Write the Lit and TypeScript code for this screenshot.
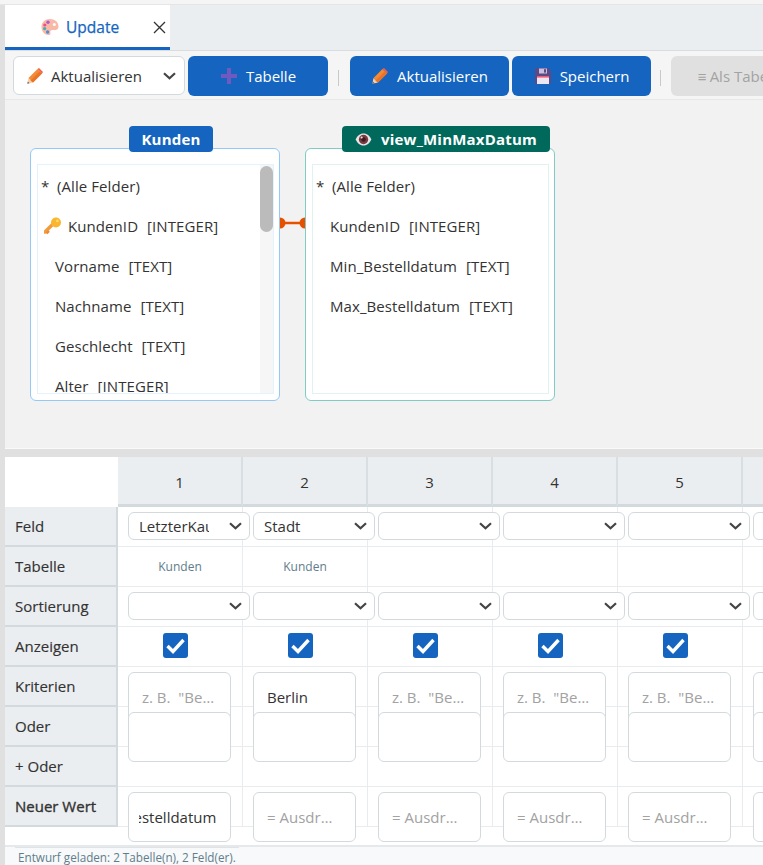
import { LitElement, html, css, svg } from "lit";
import { customElement } from "lit/decorators.js";

const pencil = html`<svg class="ico" viewBox="0 0 16 16">
  <polygon points="0.300,15.700 1.500,10 6,14.500" fill="#f6cfa8" />
  <polygon points="1.500,10 10.500,1 15,5.500 6,14.500" fill="#f58a35" />
  <polygon points="3.500,12.500 12.500,3.500 15,5.500 6,14.500" fill="#e8742a" />
  <polygon points="10.500,1 12,0 16,4 15,5.500" fill="#f0604a" />
  <polygon points="0.300,15.700 0.800,13.400 2.600,15.200" fill="#666" />
</svg>`;

const plus = html`<svg class="ico" viewBox="0 0 16 16">
  <rect x="6" y="0" width="4" height="16" fill="#6f5bbf" />
  <rect x="0" y="6" width="16" height="4" fill="#6f5bbf" />
</svg>`;

const floppy = html`<svg class="ico" viewBox="0 0 16 16">
  <path d="M0 1.500A1.500 1.500 0 0 1 1.500 0H13l3 3v11.500a1.500 1.500 0 0 1-1.500 1.500h-13A1.500 1.500 0 0 1 0 14.500z" fill="#5b4a86" />
  <rect x="4" y="0.500" width="8" height="5" fill="#c9bfe0" />
  <rect x="9" y="1.200" width="2" height="3.400" fill="#5b4a86" />
  <rect x="2" y="8" width="12" height="8" fill="#ece6f4" />
  <rect x="2" y="8" width="12" height="1.600" fill="#ef5a6f" />
</svg>`;

const key = html`<svg class="key" viewBox="0 0 18 18">
  <path d="M1 15 L9 7" stroke="#f39a3a" stroke-width="3.400" stroke-linecap="round" />
  <path d="M2.500 16.500 L5 14" stroke="#ec8a32" stroke-width="2.400" />
  <circle cx="12" cy="5.500" r="5" fill="#fbb62f" />
  <circle cx="13.400" cy="3.900" r="1.300" fill="#ffdc78" />
</svg>`;

const eye = html`<svg class="eye" viewBox="0 0 18 14">
  <path d="M0.500 7C3 2 6 0.600 9 0.600S15 2 17.500 7C15 12 12 13.400 9 13.400S3 12 0.500 7Z" fill="#e9e4e6" />
  <circle cx="9" cy="7" r="5" fill="#7b3a40" />
  <circle cx="9" cy="7" r="2.500" fill="#3c1c22" />
  <circle cx="7" cy="4.800" r="1.100" fill="#f4e4e6" />
</svg>`;

const palette = html`<svg class="palette" viewBox="0 0 18 18">
  <path d="M9 1C4 1 0.500 4.400 0.500 9s3.400 8 7 8c2 0 2.200-1.300 1.800-2.600-.4-1.500.5-2.400 2-2.400h2.700c2 0 3.500-1.200 3.500-3.300C17.500 3.800 13.600 1 9 1Z" fill="#f8b9a6" />
  <circle cx="7" cy="4.200" r="1.700" fill="#b05ad0" />
  <circle cx="3.800" cy="7" r="1.600" fill="#ec4f8f" />
  <circle cx="3.600" cy="10.600" r="1.600" fill="#3fb0b8" />
  <circle cx="6.600" cy="14" r="1.700" fill="#4b8fdc" />
  <circle cx="13.300" cy="6.500" r="1.500" fill="#fff" />
</svg>`;

const chevron = svg`<path d="M1 1.200 6.500 6.200 12 1.200" fill="none" stroke="#444" stroke-width="2.200" />`;

const kundenFields = [
  ["Vorname", "TEXT"],
  ["Nachname", "TEXT"],
  ["Geschlecht", "TEXT"],
  ["Alter", "INTEGER"],
];

const viewFields = [
  ["KundenID", "INTEGER"],
  ["Min_Bestelldatum", "TEXT"],
  ["Max_Bestelldatum", "TEXT"],
];

const labels = ["Feld", "Tabelle", "Sortierung", "Anzeigen", "Kriterien", "Oder", "+ Oder", "Neuer Wert"];
const cols = [1, 2, 3, 4, 5, 6];
const feld = ["LetzterKauf", "Stadt", "", "", "", ""];
const tabelle = ["Kunden", "Kunden", "", "", "", ""];
const kriterien = ["", "Berlin", "", "", "", ""];
const neuerWert = ["=Max_Bestelldatum", "", "", "", "", ""];

@customElement("app-root")
export class AppRoot extends LitElement {
  static styles = css`
    :host {
      display: block;
      width: 100%;
      height: 865px;
      overflow: hidden;
      background: #f5f5f5;
      font-family: "Open Sans", "Noto Sans", sans-serif;
      font-size: 15px;
      color: #333;
    }
    * {
      box-sizing: border-box;
    }
    .top {
      height: 5px;
      background: #f5f5f5;
      border-bottom: 1px solid #e6e6e6;
    }
    .shell {
      display: flex;
      height: 860px;
    }
    .edge {
      width: 5px;
      flex: none;
      background: #e0e0e0;
    }
    .main {
      flex: 1;
      min-width: 0;
      display: flex;
      flex-direction: column;
      overflow: hidden;
    }
    .tabs {
      height: 46px;
      flex: none;
      background: #ebeef1;
      border-bottom: 1px solid #d8dde0;
    }
    .tab {
      width: 165px;
      height: 45px;
      background: #fff;
      border-bottom: 3px solid #1565c0;
      display: flex;
      align-items: center;
      padding: 2px 4px 0 36px;
      color: #1565c0;
      font-size: 15.500px;
      -webkit-text-stroke: 0.250px #1565c0;
    }
    .palette {
      width: 18px;
      height: 18px;
      margin-right: 7px;
    }
    .close {
      margin-left: auto;
      width: 13px;
      height: 13px;
    }
    .toolbar {
      height: 49px;
      flex: none;
      display: flex;
      align-items: flex-start;
      padding: 5px 0 0 8px;
      gap: 3px;
      background: #f5f5f5;
      border-bottom: 1px solid #e8e8e8;
      overflow: hidden;
    }
    .mode {
      width: 172px;
      height: 39px;
      flex: none;
      display: flex;
      align-items: center;
      gap: 8px;
      padding: 0 8px 0 13px;
      background: #fff;
      border: 1px solid #d2dade;
      border-radius: 6px;
    }
    .mode svg.chev {
      margin-left: auto;
      width: 13px;
      height: 8px;
    }
    .ico {
      width: 16px;
      height: 16px;
      flex: none;
    }
    .btn {
      height: 40px;
      flex: none;
      display: flex;
      align-items: center;
      justify-content: center;
      gap: 9px;
      background: #1565c0;
      color: #fff;
      border-radius: 6px;
    }
    .btn.w140 {
      width: 140px;
      padding-left: 1px;
    }
    .btn.w159 {
      width: 159px;
      padding-left: 1px;
    }
    .btn.w139 {
      width: 139px;
      padding-left: 1px;
    }
    .btn.off {
      width: 140px;
      gap: 3px;
      background: #e0e0e0;
      color: #a3a3a3;
    }
    .sep {
      flex: none;
      height: 16px;
      width: 1px;
      margin: 14px 8px 0 7px;
      background: #c9c9c9;
    }
    .sep.b {
      margin: 14px 7px 0 6px;
    }
    .canvas {
      position: relative;
      height: 349px;
      flex: none;
      background: #f2f2f2;
      border-bottom: 1px solid #fafafa;
    }
    .node {
      position: absolute;
      top: 48px;
      width: 250px;
      height: 253px;
      background: #fff;
      border: 1px solid #90caf9;
      border-radius: 6px;
      padding: 15px 5px 6px 6px;
    }
    .node.view {
      border-color: #80cbc4;
    }
    .node.kunden {
      left: 25px;
    }
    .node.right {
      left: 300px;
    }
    .badge {
      position: absolute;
      top: -23px;
      height: 26px;
      display: flex;
      align-items: center;
      justify-content: center;
      gap: 9px;
      border-radius: 4px;
      background: #1565c0;
      color: #fff;
      font-weight: 700;
      letter-spacing: 0.200px;
    }
    .kunden .badge {
      left: 98px;
      width: 84px;
    }
    .view .badge {
      left: 36px;
      width: 208px;
      background: #00695c;
    }
    .eye {
      width: 17px;
      height: 13px;
    }
    .inner {
      height: 100%;
      display: flex;
      border: 1px solid #e3f2fd;
      overflow: hidden;
    }
    .view .inner {
      border-color: #e0f2f1;
    }
    .list {
      flex: 1;
      min-width: 0;
      padding-top: 1px;
    }
    .row {
      height: 40px;
      display: flex;
      align-items: center;
      padding-left: 17px;
      white-space: nowrap;
      letter-spacing: 0.080px;
    }
    .row.all {
      padding-left: 3px;
    }
    .row.pk {
      padding-left: 6px;
    }
    .star {
      width: 16px;
    }
    .key {
      width: 18px;
      height: 18px;
      margin-right: 6px;
    }
    .type {
      margin-left: 9px;
    }
    .track {
      width: 13px;
      flex: none;
      background: #f6f6f6;
    }
    .thumb {
      height: 66px;
      margin-top: 1px;
      border-radius: 7px;
      background: #bbb;
    }
    .link {
      position: absolute;
      left: 274px;
      top: 114px;
      width: 27px;
      height: 18px;
    }
    .splitter {
      height: 8px;
      flex: none;
      background: #e0e0e0;
    }
    .gridwrap {
      height: 388px;
      flex: none;
      background: #fff;
      overflow: hidden;
    }
    .grid {
      display: grid;
      grid-template-columns: 113px repeat(6, 125px);
      grid-template-rows: 50px repeat(8, 40px);
    }
    .corner {
      background: #fff;
    }
    .head {
      display: flex;
      align-items: center;
      justify-content: center;
      background: #ebeef1;
      border-right: 2px solid #d8dfe3;
      border-bottom: 3px solid #d2dade;
      padding-top: 2px;
    }
    .label {
      display: flex;
      align-items: center;
      padding-left: 10px;
      background: #ebeef1;
      border-right: 2px solid #d2dade;
      border-bottom: 2px solid #d2dade;
      -webkit-text-stroke: 0.150px #333;
    }
    .label.strong {
      -webkit-text-stroke: 0.350px #333;
    }
    .cell {
      border-right: 1px solid #e9ecef;
      border-bottom: 1px solid #e9ecef;
      padding: 5px 0 0 10px;
      min-width: 0;
    }
    .cell.table {
      padding: 0;
      display: flex;
      align-items: center;
      justify-content: center;
      font-size: 12px;
      color: #607d8b;
    }
    .pick {
      position: relative;
      width: 122px;
      height: 28px;
    }
    select {
      appearance: none;
      display: block;
      width: 100%;
      height: 100%;
      padding: 0 40px 0 10px;
      background: #fff;
      border: 1px solid #d2dade;
      border-radius: 6px;
      font: inherit;
      color: #333;
    }
    .pick svg {
      position: absolute;
      right: 8px;
      top: 10px;
      width: 13px;
      height: 8px;
      pointer-events: none;
    }
    .check {
      width: 25px;
      height: 25px;
      margin: 1px 0 0 35px;
      background: #1565c0;
      border-radius: 3px;
    }
    .check svg {
      display: block;
      width: 25px;
      height: 25px;
    }
    input {
      display: block;
      width: 103px;
      height: 50px;
      padding: 0 14px 0 13px;
      background: #fff;
      border: 1px solid #d2dade;
      border-radius: 6px;
      font: inherit;
      color: #333;
      text-overflow: ellipsis;
    }
    input::placeholder {
      color: #a2a2a2;
      opacity: 1;
    }
    input.scrolled {
      padding: 0 14px 0 10px;
      text-overflow: clip;
    }
    .status {
      flex: 1;
      background: #f8f9fa;
      border-top: 2px solid #e6e9eb;
      padding-left: 10px;
      font-size: 11.700px;
      color: #607d8b;
    }
    .status span {
      display: inline-block;
      padding: 0 3px;
      height: 18px;
      line-height: 19px;
      border-top: 1px solid #dfe3e6;
    }
  `;

  updated() {
    this.renderRoot.querySelectorAll<HTMLInputElement>("input.scrolled").forEach((el) => {
      el.scrollLeft = el.scrollWidth;
    });
  }

  private pick(value: string, options: string[] = []) {
    return html`<div class="pick">
      <select>
        <option ?selected=${!value}></option>
        ${options.map((o) => html`<option ?selected=${o === value}>${o}</option>`)}
      </select>
      <svg viewBox="0 0 13 8">${chevron}</svg>
    </div>`;
  }

  private field(rows: string[][]) {
    return rows.map(
      ([name, type]) => html`<div class="row"><span>${name}</span><span class="type">[${type}]</span></div>`
    );
  }

  render() {
    return html`
      <div class="top"></div>
      <div class="shell">
        <div class="edge"></div>
        <div class="main">
          <div class="tabs">
            <div class="tab">
              ${palette}Update
              <svg class="close" viewBox="0 0 13 13">
                <path d="M1 1 12 12M12 1 1 12" stroke="#333" stroke-width="1.300" />
              </svg>
            </div>
          </div>

          <div class="toolbar">
            <div class="mode">
              ${pencil}<span>Aktualisieren</span>
              <svg class="chev" viewBox="0 0 13 8">${chevron}</svg>
            </div>
            <div class="btn w140">${plus}Tabelle</div>
            <div class="sep"></div>
            <div class="btn w159">${pencil}Aktualisieren</div>
            <div class="btn w139">${floppy}Speichern</div>
            <div class="sep b"></div>
            <div class="btn off"><span>≡</span>Als Tabelle</div>
          </div>

          <div class="canvas">
            <div class="node kunden">
              <div class="badge">Kunden</div>
              <div class="inner">
                <div class="list">
                  <div class="row all"><span class="star">*</span><span>(Alle Felder)</span></div>
                  <div class="row pk">${key}<span>KundenID</span><span class="type">[INTEGER]</span></div>
                  ${this.field(kundenFields)}
                </div>
                <div class="track"><div class="thumb"></div></div>
              </div>
            </div>
            <svg class="link" viewBox="0 0 27 18">
              <path d="M2 9H25" stroke="#e65100" stroke-width="2.500" />
              <path d="M1 3.500A5.500 5.500 0 0 1 1 14.500Z" fill="#e65100" />
              <path d="M26 3.500A5.500 5.500 0 0 0 26 14.500Z" fill="#e65100" />
            </svg>
            <div class="node view right">
              <div class="badge">${eye}view_MinMaxDatum</div>
              <div class="inner">
                <div class="list">
                  <div class="row all"><span class="star">*</span><span>(Alle Felder)</span></div>
                  ${this.field(viewFields)}
                </div>
              </div>
            </div>
          </div>

          <div class="splitter"></div>

          <div class="gridwrap">
            <div class="grid">
              <div class="corner"></div>
              ${cols.map((c) => html`<div class="head">${c}</div>`)}

              <div class="label">${labels[0]}</div>
              ${feld.map((v) => html`<div class="cell">${this.pick(v, v ? [v] : [])}</div>`)}

              <div class="label">${labels[1]}</div>
              ${tabelle.map((v) => html`<div class="cell table">${v}</div>`)}

              <div class="label">${labels[2]}</div>
              ${cols.map(() => html`<div class="cell">${this.pick("")}</div>`)}

              <div class="label">${labels[3]}</div>
              ${cols.map(
                () => html`<div class="cell">
                  <div class="check">
                    <svg viewBox="0 0 25 25">
                      <path d="M4.500 13 10 18.500 20.500 7" fill="none" stroke="#fff" stroke-width="3.400" />
                    </svg>
                  </div>
                </div>`
              )}

              <div class="label">${labels[4]}</div>
              ${kriterien.map(
                (v) => html`<div class="cell"><input .value=${v} placeholder='z. B.  "Berlin"' /></div>`
              )}

              <div class="label">${labels[5]}</div>
              ${cols.map(() => html`<div class="cell"><input /></div>`)}

              <div class="label">${labels[6]}</div>
              ${cols.map(() => html`<div class="cell"></div>`)}

              <div class="label strong">${labels[7]}</div>
              ${neuerWert.map(
                (v) => html`<div class="cell">
                  <input class=${v ? "scrolled" : ""} .value=${v} placeholder="= Ausdruck" />
                </div>`
              )}
            </div>
          </div>

          <div class="status"><span>Entwurf geladen: 2 Tabelle(n), 2 Feld(er).</span></div>
        </div>
      </div>
    `;
  }
}
